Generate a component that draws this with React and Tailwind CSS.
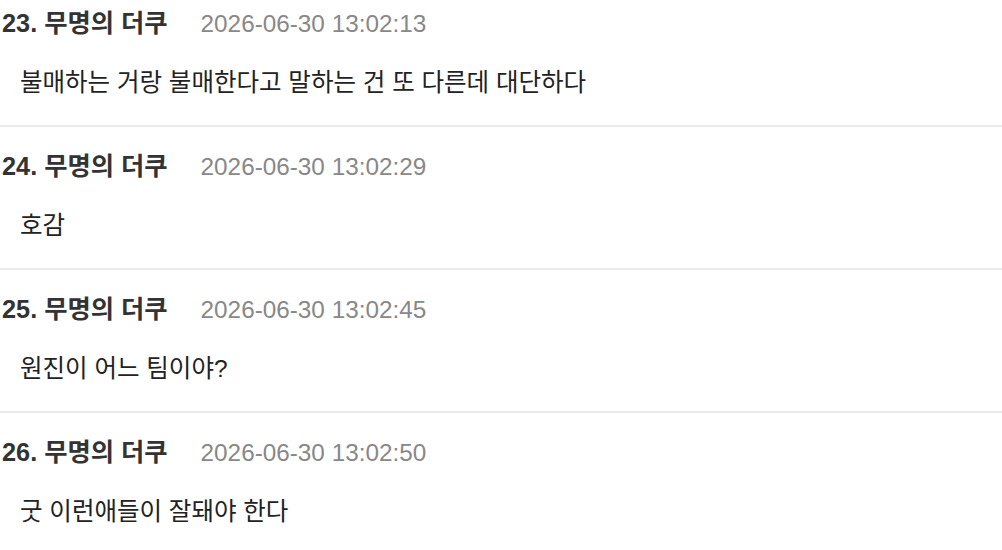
const comments = [
  { no: 23, time: "2026-06-30 13:02:13", text: "불매하는 거랑 불매한다고 말하는 건 또 다른데 대단하다" },
  { no: 24, time: "2026-06-30 13:02:29", text: "호감" },
  { no: 25, time: "2026-06-30 13:02:45", text: "원진이 어느 팀이야?" },
  { no: 26, time: "2026-06-30 13:02:50", text: "굿 이런애들이 잘돼야 한다" },
];

function Comment({ no, time, text }) {
  return (
    <li className="border-b-2 border-[#ebebeb] pt-[24px] pb-[26px]">
      <div className="flex items-center pl-[2px] h-[32px] whitespace-nowrap">
        <span className="text-[25.3px] font-bold text-[#333333]">
          {no}. 무명의 더쿠
        </span>
        <span className="ml-[33px] text-[24.3px] text-[#888888]">{time}</span>
      </div>
      <p className="mt-[27px] pl-[20px] h-[32px] leading-[32px] text-[24.5px] text-[#222222] whitespace-nowrap">
        {text}
      </p>
    </li>
  );
}

export default function App() {
  return (
    <div
      className="w-[1002px] h-[550px] overflow-hidden bg-white"
      style={{ fontFamily: '"Liberation Sans", "Noto Sans CJK KR", sans-serif' }}
    >
      <ul className="-mt-4">
        {comments.map((c) => (
          <Comment key={c.no} {...c} />
        ))}
      </ul>
    </div>
  );
}
